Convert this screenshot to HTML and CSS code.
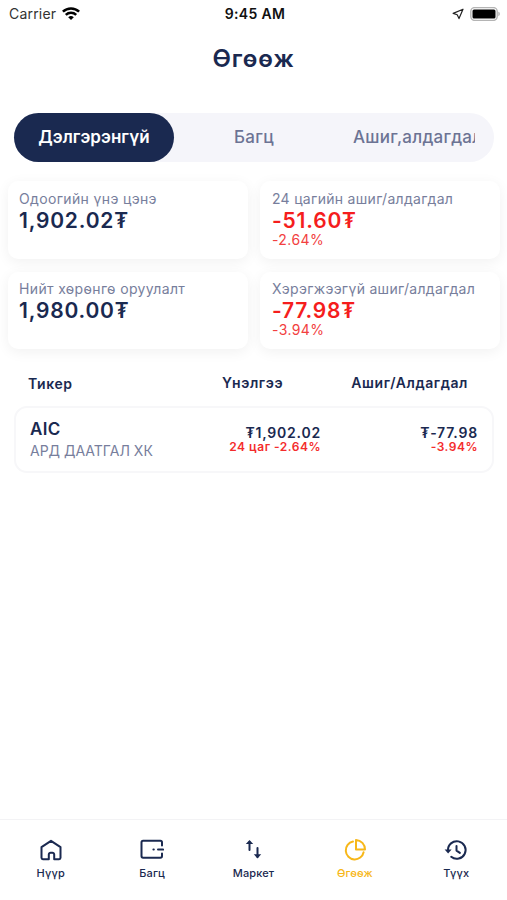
FILE: index.html
```html
<!DOCTYPE html>
<html lang="mn">
<head>
<meta charset="utf-8">
<meta name="viewport" content="width=device-width, initial-scale=1">
<title>Өгөөж</title>
<link rel="stylesheet" href="styles.css">
</head>
<body>
<div class="app">
  <div class="status">
    <div class="status-left"><span class="carrier">Carrier</span>
      <svg class="wifi" width="18" height="14" viewBox="0 0 18 14" fill="none" stroke="#000" stroke-width="2.5"><path d="M.9 4.700a11.600 11.600 0 0 1 16.200 0M3.800 7.800a7.500 7.500 0 0 1 10.400 0"/><path d="M9 13.100 6.200 10.300a4 4 0 0 1 5.600 0z" fill="#000" stroke="none"/></svg>
    </div>
    <span class="clock">9:45 AM</span>
    <div class="status-right">
      <svg width="12" height="12" viewBox="0 0 12 12" fill="none" stroke="#222" stroke-width="1.2" stroke-linejoin="round"><path d="M11 1.200 1.200 5.400l4 1.400 1.800 3.800z"/></svg>
      <svg width="31" height="14" viewBox="0 0 31 14"><rect x=".8" y=".6" width="26.4" height="12.8" rx="3.8" fill="#fff" stroke="#b4b4b4" stroke-width="1.4"/><rect x="2.5" y="2.4" width="23" height="9.2" rx="1.5" fill="#000"/><path d="M28.4 4.8c1.8.6 1.8 3.8 0 4.400z" fill="#aaa"/></svg>
    </div>
  </div>
  <h1 class="title">Өгөөж</h1>
  <div class="tabs">
    <div class="tab active"><span>Дэлгэрэнгүй</span></div>
    <div class="tab"><span>Багц</span></div>
    <div class="tab clipped"><span>Ашиг,алдагдал</span></div>
  </div>
  <div class="cards">
    <div class="card"><div class="label">Одоогийн үнэ цэнэ</div><div class="value">1,902.02₮</div></div>
    <div class="card right"><div class="label">24 цагийн ашиг/алдагдал</div><div class="value down">-51.60₮</div><div class="pct">-2.64%</div></div>
    <div class="card lower"><div class="label">Нийт хөрөнгө оруулалт</div><div class="value">1,980.00₮</div></div>
    <div class="card right lower"><div class="label">Хэрэгжээгүй ашиг/алдагдал</div><div class="value down">-77.98₮</div><div class="pct">-3.94%</div></div>
  </div>
  <div class="thead"><span class="c1">Тикер</span><span>Үнэлгээ</span><span class="c3">Ашиг/Алдагдал</span></div>
  <div class="row">
    <div class="stock"><div class="ticker">AIC</div><div class="name">АРД ДААТГАЛ ХК</div></div>
    <div class="num"><div class="amount">₮1,902.02</div><div class="change">24 цаг -2.64%</div></div>
    <div class="num"><div class="amount">₮-77.98</div><div class="change">-3.94%</div></div>
  </div>
  <nav class="nav">
    <div class="item"><svg width="24" height="24" viewBox="0 0 24 24"><path d="M2.500 9.200 12 2.800l9.500 6.400v10.600a1.400 1.400 0 0 1-1.400 1.400h-4.900V16.500a1.800 1.800 0 0 0-1.800-1.800h-1.800a1.800 1.800 0 0 0-1.800 1.800v4.700H3.900a1.400 1.400 0 0 1-1.400-1.400z"/></svg><span>Нүүр</span></div>
    <div class="item"><svg width="24" height="24" viewBox="0 0 24 24"><path d="M22 7.500V4.400A1.600 1.600 0 0 0 20.400 2.800H3.100a1.600 1.600 0 0 0-1.600 1.600v13.700a1.600 1.600 0 0 0 1.600 1.600h17.300a1.600 1.600 0 0 0 1.600-1.600V15.500M18 11.600h5.200M13.400 11.600h.4"/></svg><span>Багц</span></div>
    <div class="item"><svg width="24" height="24" viewBox="0 0 24 24"><path d="M8.500 12V4M16.500 10v9"/><path class="solid" d="M4.800 6 8.500 2l3.700 4zM12.800 16.200l3.700 4.200 3.700-4.200z"/></svg><span>Маркет</span></div>
    <div class="item on"><svg width="24" height="24" viewBox="0 0 24 24"><path d="M10 3.600a9 9 0 1 0 10.600 10.600M13 1.900v9.600h9A9.500 9.500 0 0 0 13 1.900z"/></svg><span>Өгөөж</span></div>
    <div class="item"><svg width="24" height="24" viewBox="0 0 24 24"><path d="M4 12.500a8.800 8.800 0 1 1 3.200 6.300M12.500 8v4.600l3.400 2.300"/><path class="solid" d="M.6 11.400h7L4.100 15.600z"/></svg><span>Түүх</span></div>
  </nav>
</div>
</body>
</html>
```
FILE: styles.css
```css
* { box-sizing: border-box; }
body { margin: 0; background: #fff; font-family: Inter, "Noto Sans", sans-serif; color: #1a2950; }
.app { height: 900px; display: flex; flex-direction: column; overflow: hidden; white-space: nowrap; }
.status { height: 27px; padding: 0 6px 0 9px; display: grid; grid-template-columns: 1fr auto 1fr; align-items: center; font-size: 14px; line-height: 20px; color: #111; }
.status-left, .status-right { display: flex; align-items: center; gap: 6px; }
.status-right { justify-content: flex-end; }
.carrier { color: #333; letter-spacing: .2px; }
.clock { font-weight: 600; letter-spacing: .35px; }
.title { margin: 16px 0 0; height: 32px; line-height: 32px; text-align: center; font-size: 24px; font-weight: 600; letter-spacing: .9px; }
.tabs { margin: 38px 13px 0 14px; height: 49px; display: flex; border-radius: 25px; background: #f5f5fa; font-size: 17px; color: #6c7394; }
.tab { flex: 1; display: flex; align-items: center; justify-content: center; border-radius: 25px; font-weight: 500; padding: 0 19px 2px; letter-spacing: .35px; }
.tab span { overflow: hidden; }
.active { background: #1a2950; color: #fff; font-weight: 600; letter-spacing: .05px; }
.clipped { justify-content: flex-start; min-width: 0; letter-spacing: .25px; }
.cards { margin: 19px 7px 0 8px; display: grid; grid-template-columns: 240px 240px; grid-template-rows: 78px 77px; column-gap: 12px; row-gap: 13px; }
.card { border-radius: 10px; background: #fff; padding: 8px 11px; box-shadow: 0 3px 14px rgba(0,0,0,.06); }
.right { padding-left: 12px; }
.lower { padding-top: 7px; }
.label { font-size: 14px; line-height: 19px; color: #777e9c; letter-spacing: .35px; }
.right .label { letter-spacing: .3px; }
.value { margin-top: 1px; font-size: 21px; line-height: 23px; font-weight: 600; letter-spacing: .8px; }
.down { color: #f51d1d; }
.pct { font-size: 14px; line-height: 16px; color: #f24040; letter-spacing: .4px; }
.thead { height: 57px; padding: 23px 39px 0 28px; display: grid; grid-template-columns: 194px auto 1fr; font-size: 14px; line-height: 22px; font-weight: 600; letter-spacing: .6px; }
.c1 { margin-top: 1px; }
.c3 { text-align: right; }
.row { margin: 0 13px 0 14px; height: 67px; border: 2px solid #f7f7f9; border-radius: 13px; padding: 10px 14px 0; display: grid; grid-template-columns: 150px 141px 1fr; }
.ticker { font-size: 17px; line-height: 22px; font-weight: 600; letter-spacing: .3px; }
.name { font-size: 14px; line-height: 21px; color: #777e9c; }
.num { text-align: right; padding-top: 6px; }
.amount { font-size: 14px; line-height: 17px; font-weight: 600; letter-spacing: .8px; }
.change { font-size: 12px; line-height: 12px; font-weight: 600; color: #f42c2c; letter-spacing: .5px; }
.nav { margin-top: auto; height: 81px; border-top: 1px solid #f3f3f5; display: grid; grid-template-columns: repeat(5, 1fr); }
.item { display: flex; flex-direction: column; align-items: center; padding-top: 18px; font-size: 11px; line-height: 16px; font-weight: 500; letter-spacing: .15px; }
.item span { margin-top: 3px; }
.item svg { fill: none; stroke: currentColor; stroke-width: 2; stroke-linejoin: round; stroke-linecap: round; }
.item .solid { fill: currentColor; stroke: none; }
.on { color: #f7b719; }
```
